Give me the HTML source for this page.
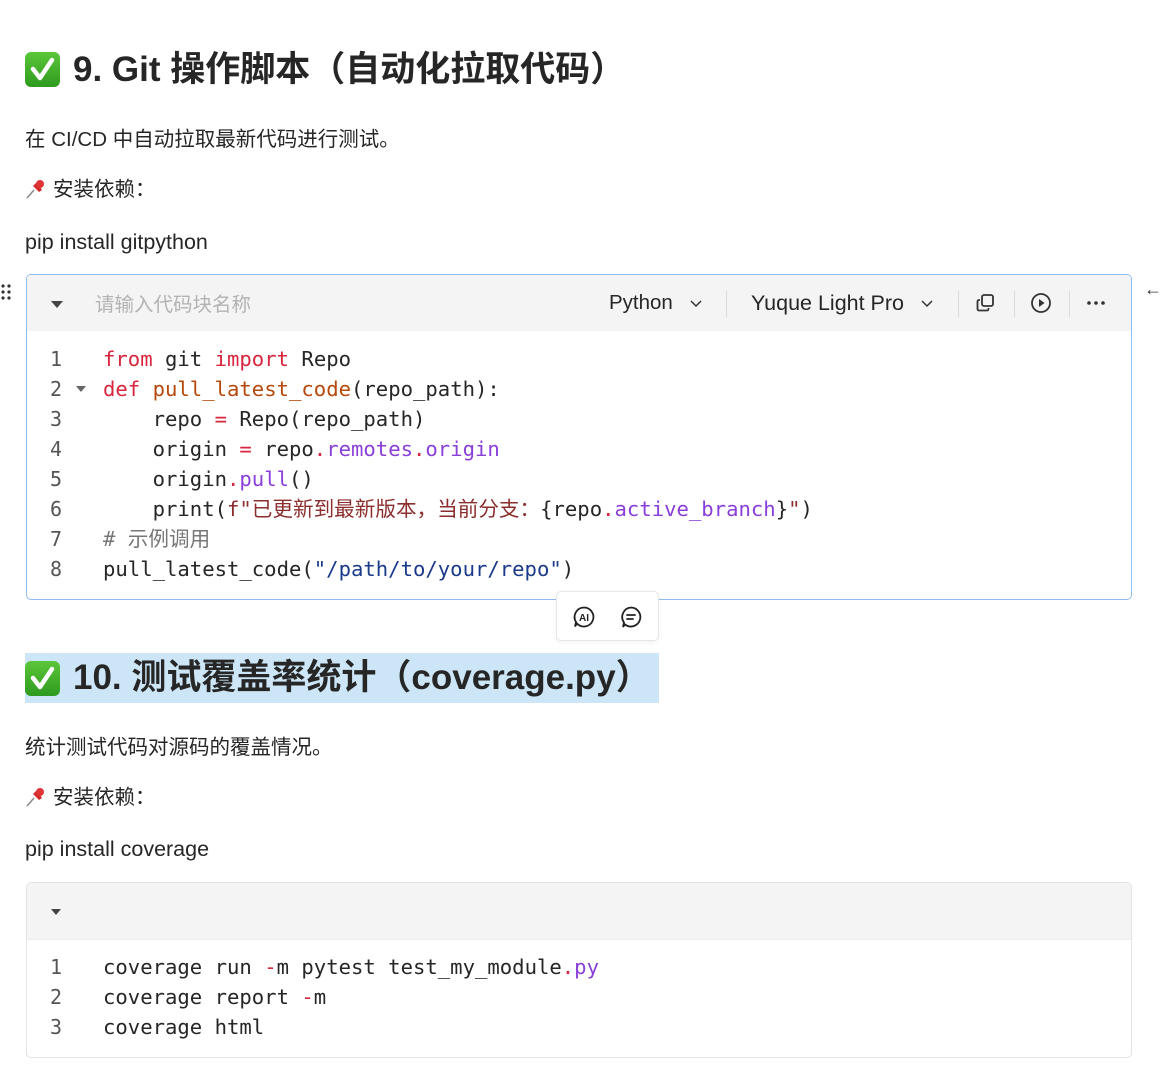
<!DOCTYPE html>
<html><head><meta charset="utf-8">
<style>
*{margin:0;padding:0;box-sizing:border-box}
body{width:1160px;height:1080px;background:#fff;position:relative;overflow:hidden;font-family:"Liberation Sans","Noto Sans CJK SC",sans-serif;color:#262626}
.abs{position:absolute;white-space:nowrap}
.cl{white-space:pre}
.h{font-size:35px;font-weight:bold;line-height:40px;color:#262626}
.p{font-size:20.5px;line-height:28px}
.chk{position:absolute;width:35px;height:35px;border-radius:6px;background:linear-gradient(#5cc63a,#2e9a1e)}
.code{font-family:"DejaVu Sans Mono","Liberation Mono","Noto Sans CJK SC",monospace;font-size:20.6px;line-height:30px;color:#262626}
.ln{position:absolute;left:50px;color:#555;font-family:"DejaVu Sans Mono",monospace;font-size:20px}
.k{color:#d7263d}.f{color:#b5480b}.pr{color:#8a3fd9}.s{color:#1b3a8a}.st{color:#8b2e2e}.c{color:#777}
.tri{position:absolute;width:0;height:0;border-left:6px solid transparent;border-right:6px solid transparent;border-top:7px solid #444}
</style></head><body>

<div class="chk" style="left:25px;top:52px"><svg width="35" height="35" viewBox="0 0 35 35"><path d="M8 17 L15 26 L27 8" fill="none" stroke="#fff" stroke-width="4.5" stroke-linecap="round" stroke-linejoin="round"/></svg></div>
<div class="abs h" style="left:73px;top:50px">9. Git 操作脚本（自动化拉取代码）</div>

<div class="abs p" style="left:25px;top:126px">在 CI/CD 中自动拉取最新代码进行测试。</div>
<svg class="abs" style="left:25px;top:178px" width="22" height="22" viewBox="0 0 22 22"><path d="M2 20 L9 12" stroke="#888" stroke-width="1.5"/><path d="M8 8 L14 14 L17 12 L12 4 Z" fill="#d42a2a"/><circle cx="15" cy="6" r="4" fill="#e03333"/></svg>
<div class="abs p" style="left:53px;top:176px">安装依赖：</div>
<div class="abs p" style="left:25px;top:228px;font-size:21.5px">pip install gitpython</div>

<svg class="abs" style="left:0;top:283px" width="12" height="18"><g fill="#333"><circle cx="3" cy="3" r="1.6"/><circle cx="9" cy="3" r="1.6"/><circle cx="3" cy="9" r="1.6"/><circle cx="9" cy="9" r="1.6"/><circle cx="3" cy="15" r="1.6"/><circle cx="9" cy="15" r="1.6"/></g></svg>
<div class="abs" style="left:1144px;top:279px;font-size:18px;color:#333">←</div>

<div class="abs" style="left:26px;top:274px;width:1106px;height:326px;border:1.5px solid #8fbdf0;border-radius:5px;overflow:hidden;background:#fff">
  <div style="height:56px;background:#f4f4f4;position:relative">
    <div class="tri" style="left:24px;top:26px"></div>
    <div class="abs" style="left:68px;top:13px;font-size:19.5px;color:#b3b3b3">请输入代码块名称</div>
    <div class="abs" style="left:582px;top:16px;font-size:20.5px;color:#262626">Python</div>
    <svg class="abs" style="left:662px;top:24px" width="14" height="10"><path d="M2 2 L7 7 L12 2" fill="none" stroke="#333" stroke-width="1.5"/></svg>
    <div class="abs" style="left:699px;top:16px;width:1px;height:26px;background:#ddd"></div>
    <div class="abs" style="left:724px;top:16px;font-size:21.5px;color:#262626">Yuque Light Pro</div>
    <svg class="abs" style="left:893px;top:24px" width="14" height="10"><path d="M2 2 L7 7 L12 2" fill="none" stroke="#333" stroke-width="1.5"/></svg>
    <div class="abs" style="left:931px;top:16px;width:1px;height:26px;background:#ddd"></div>
    <svg class="abs" style="left:948px;top:17px" width="22" height="22" viewBox="0 0 22 22"><rect x="7" y="3" width="11" height="11" rx="2" fill="none" stroke="#333" stroke-width="1.8"/><path d="M5 8 H4 a1.5 1.5 0 0 0 -1.5 1.5 V17 a1.5 1.5 0 0 0 1.5 1.5 H12 a1.5 1.5 0 0 0 1.5 -1.5 V16" fill="none" stroke="#333" stroke-width="1.8"/></svg>
    <div class="abs" style="left:987px;top:16px;width:1px;height:26px;background:#ddd"></div>
    <svg class="abs" style="left:1003px;top:17px" width="22" height="22" viewBox="0 0 22 22"><circle cx="11" cy="11" r="9" fill="none" stroke="#333" stroke-width="1.8"/><path d="M9 7 L14.5 11 L9 15 Z" fill="#333"/></svg>
    <div class="abs" style="left:1042px;top:16px;width:1px;height:26px;background:#ddd"></div>
    <svg class="abs" style="left:1059px;top:25px" width="20" height="6"><g fill="#333"><circle cx="3" cy="3" r="1.8"/><circle cx="10" cy="3" r="1.8"/><circle cx="17" cy="3" r="1.8"/></g></svg>
  </div>
</div>
<div class="code">
<div class="ln abs" style="top:344px">1</div>
<div class="ln abs" style="top:374px">2</div>
<div class="tri" style="left:76px;top:386px;border-top-color:#666;border-left-width:5px;border-right-width:5px;border-top-width:6px"></div>
<div class="ln abs" style="top:404px">3</div>
<div class="ln abs" style="top:434px">4</div>
<div class="ln abs" style="top:464px">5</div>
<div class="ln abs" style="top:494px">6</div>
<div class="ln abs" style="top:524px">7</div>
<div class="ln abs" style="top:554px">8</div>
<div class="abs cl" style="left:103px;top:344px"><span class="k">from</span> git <span class="k">import</span> Repo</div>
<div class="abs cl" style="left:103px;top:374px"><span class="k">def</span> <span class="f">pull_latest_code</span>(repo_path):</div>
<div class="abs cl" style="left:103px;top:404px">    repo <span class="k">=</span> Repo(repo_path)</div>
<div class="abs cl" style="left:103px;top:434px">    origin <span class="k">=</span> repo<span class="k">.</span><span class="pr">remotes</span><span class="k">.</span><span class="pr">origin</span></div>
<div class="abs cl" style="left:103px;top:464px">    origin<span class="k">.</span><span class="pr">pull</span>()</div>
<div class="abs cl" style="left:103px;top:494px">    print(<span class="st">f"已更新到最新版本，当前分支：</span>{repo<span class="k">.</span><span class="pr">active_branch</span>}<span class="st">"</span>)</div>
<div class="abs cl c" style="left:103px;top:524px"># 示例调用</div>
<div class="abs cl" style="left:103px;top:554px">pull_latest_code(<span class="s">"/path/to/your/repo"</span>)</div>
</div>

<div class="abs" style="left:556px;top:591px;width:103px;height:50px;background:#fff;border:1px solid #e6e6e6;border-radius:5px;box-shadow:0 2px 6px rgba(0,0,0,.05)">
  <svg class="abs" style="left:15px;top:13px" width="24" height="24" viewBox="0 0 24 24"><path d="M12 2.5 a9.5 9.5 0 1 1 -7 16 L3 21.5 L4 17 A9.5 9.5 0 0 1 12 2.5Z" fill="none" stroke="#222" stroke-width="1.8"/><text x="12" y="16" text-anchor="middle" font-family="Liberation Sans" font-weight="bold" font-size="10" fill="#222">AI</text></svg>
  <svg class="abs" style="left:62px;top:13px" width="24" height="24" viewBox="0 0 24 24"><path d="M12 2.5 a9.5 9.5 0 1 1 -6 17 L4 22 L5 17.5 A9.5 9.5 0 0 1 12 2.5Z" fill="none" stroke="#222" stroke-width="1.8"/><path d="M8 10 H16 M8 14 H14" stroke="#222" stroke-width="1.8" stroke-linecap="round"/></svg>
</div>

<div class="abs" style="left:25px;top:653px;width:634px;height:50px;background:#cde6f7"></div>
<div class="chk" style="left:25px;top:661px"><svg width="35" height="35" viewBox="0 0 35 35"><path d="M8 17 L15 26 L27 8" fill="none" stroke="#fff" stroke-width="4.5" stroke-linecap="round" stroke-linejoin="round"/></svg></div>
<div class="abs h" style="left:73px;top:658px">10. 测试覆盖率统计（coverage.py）</div>

<div class="abs p" style="left:25px;top:734px">统计测试代码对源码的覆盖情况。</div>
<svg class="abs" style="left:25px;top:786px" width="22" height="22" viewBox="0 0 22 22"><path d="M2 20 L9 12" stroke="#888" stroke-width="1.5"/><path d="M8 8 L14 14 L17 12 L12 4 Z" fill="#d42a2a"/><circle cx="15" cy="6" r="4" fill="#e03333"/></svg>
<div class="abs p" style="left:53px;top:784px">安装依赖：</div>
<div class="abs p" style="left:25px;top:835px;font-size:21.5px">pip install coverage</div>

<div class="abs" style="left:26px;top:882px;width:1106px;height:176px;border:1px solid #e3e3e3;border-radius:5px;overflow:hidden;background:#fff">
  <div style="height:57px;background:#f4f4f4;position:relative;border-bottom:1px solid #ededed">
    <div class="tri" style="left:24px;top:26px;border-left-width:5px;border-right-width:5px;border-top-width:6px"></div>
  </div>
</div>
<div class="code">
<div class="ln abs" style="top:952px">1</div>
<div class="ln abs" style="top:982px">2</div>
<div class="ln abs" style="top:1012px">3</div>
<div class="abs cl" style="left:103px;top:952px">coverage run <span class="k">-</span>m pytest test_my_module<span class="k">.</span><span class="pr">py</span></div>
<div class="abs cl" style="left:103px;top:982px">coverage report <span class="k">-</span>m</div>
<div class="abs cl" style="left:103px;top:1012px">coverage html</div>
</div>

</body></html>
